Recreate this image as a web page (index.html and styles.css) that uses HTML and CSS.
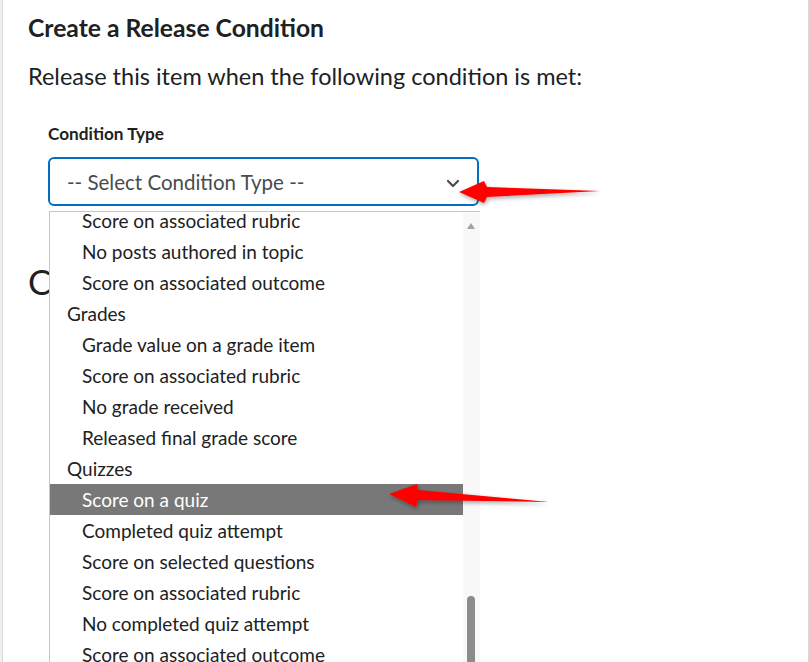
FILE: index.html
```html
<!DOCTYPE html>
<html lang="en">
<head>
    <meta charset="UTF-8">
    <title>Create a Release Condition</title>
    <link rel="stylesheet" href="styles.css">
</head>
<body>
    <div class="dialog">
        <h2 class="title">Create a Release Condition</h2>
        <p class="intro">Release this item when the following condition is met:</p>

        <div class="field">
            <label class="label">Condition Type</label>
            <div class="select">
                <span>-- Select Condition Type --</span>
                <svg class="chevron" width="14" height="9" viewBox="0 0 14 9"><path d="M2 2l5 5 5-5" fill="none" stroke="#494c4e" stroke-width="2.2" stroke-linecap="round" stroke-linejoin="round"/></svg>
            </div>

            <!-- open dropdown list -->
            <div class="dropdown">
                <div class="options">
                    <div class="opt sub">Score on associated rubric</div>
                    <div class="opt sub">No posts authored in topic</div>
                    <div class="opt sub">Score on associated outcome</div>
                    <div class="opt">Grades</div>
                    <div class="opt sub">Grade value on a grade item</div>
                    <div class="opt sub">Score on associated rubric</div>
                    <div class="opt sub">No grade received</div>
                    <div class="opt sub">Released final grade score</div>
                    <div class="opt">Quizzes</div>
                    <div class="opt sub selected">Score on a quiz</div>
                    <div class="opt sub">Completed quiz attempt</div>
                    <div class="opt sub">Score on selected questions</div>
                    <div class="opt sub">Score on associated rubric</div>
                    <div class="opt sub">No completed quiz attempt</div>
                    <div class="opt sub">Score on associated outcome</div>
                </div>
                <div class="scrollbar">
                    <span class="up"></span>
                    <span class="thumb"></span>
                </div>
            </div>
        </div>

        <h2 class="section">Conditions</h2>
    </div>

    <!-- annotation arrows -->
    <svg class="arrows" width="809" height="662" viewBox="0 0 809 662">
        <defs>
            <filter id="shadow" x="-20%" y="-50%" width="140%" height="200%">
                <feDropShadow dx="1" dy="2" stdDeviation="2" flood-color="#000" flood-opacity="0.35"/>
            </filter>
        </defs>
        <polygon filter="url(#shadow)" fill="#ff0000" points="459,192 484,181 487,187 600,191 487,197 484,203"/>
        <polygon filter="url(#shadow)" fill="#ff0000" points="389,494 417,484 418,490 549,502 418,500 416,507"/>
    </svg>
</body>
</html>
```

FILE: styles.css
```css
body {
    margin: 0;
    background: #eef0f1;
    font-family: Lato, "Open Sans", sans-serif;
    color: #202122;
    height: 662px;
    overflow: hidden;
}
.dialog {
    margin-left: 2px;
    margin-top: -10px;
    height: 700px;
    background: #fff;
    border: 1px solid #d8dadc;
    border-radius: 8px 0 0 0;
    padding: 20px 0 0 25px;
}
.title {
    margin: 0;
    font-size: 24.7px;
    font-weight: 700;
    line-height: 34px;
}
.intro {
    margin: 16px 0 0;
    font-size: 23.5px;
    line-height: 30px;
}
.field {
    position: relative;
    margin: 32px 0 0 20px;
    width: 431px;
}
.label {
    display: block;
    font-size: 17.2px;
    font-weight: 700;
    line-height: 22px;
}
.select {
    margin-top: 12px;
    height: 45px;
    border: 2px solid #006fbf;
    border-radius: 6px;
    display: flex;
    align-items: center;
    justify-content: space-between;
    padding: 0 17px 0 17px;
    font-size: 20.5px;
    color: #494c4e;
}
.chevron {
    margin-top: 3px;
}
.dropdown {
    position: absolute;
    left: 1px;
    top: 88px;
    width: 430px;
    height: 460px;
    border: 1px solid #c6c6c6;
    border-right: none;
    background: #fff;
    overflow: hidden;
    display: flex;
}
.options {
    flex: 1;
    margin-top: -7px;
}
.opt {
    height: 31px;
    line-height: 31px;
    font-size: 19px;
    padding-left: 17px;
    color: #202122;
    white-space: nowrap;
}
.opt.sub {
    padding-left: 32px;
}
.opt.selected {
    background: #787878;
    color: #fff;
}
.scrollbar {
    position: relative;
    width: 17px;
    background: #f8f8f8;
}
.up {
    position: absolute;
    left: 4px;
    top: 11px;
    width: 0;
    height: 0;
    border-left: 4.5px solid transparent;
    border-right: 4.5px solid transparent;
    border-bottom: 6px solid #a3a3a3;
}
.thumb {
    position: absolute;
    left: 4px;
    top: 384px;
    width: 8px;
    height: 200px;
    border-radius: 4px;
    background: #8b8b8b;
}
.section {
    margin: 55px 0 0;
    font-size: 35px;
    font-weight: 400;
    line-height: 40px;
}
.arrows {
    position: absolute;
    left: 0;
    top: 0;
    pointer-events: none;
}
```
